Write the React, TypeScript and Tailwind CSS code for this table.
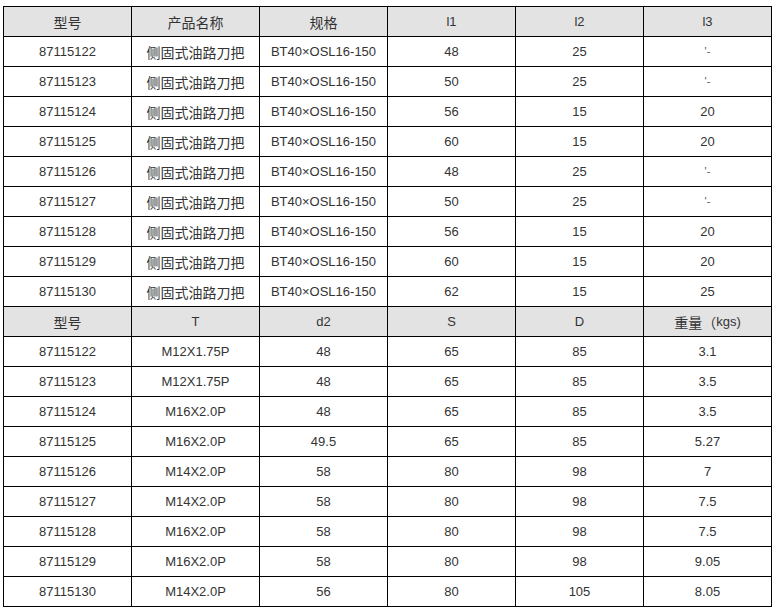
import React from "react";

const CJK = /[\u3000-\u9fff\uff00-\uffef]/;

function Txt({ t }: { t: string }) {
  // split into CJK and Latin runs
  const parts: { s: string; c: boolean }[] = [];
  for (const ch of t) {
    const c = CJK.test(ch);
    const last = parts[parts.length - 1];
    if (last && last.c === c) last.s += ch;
    else parts.push({ s: ch, c });
  }
  return (
    <>
      {parts.map((p, i) =>
        p.c ? (
          <span key={i} className="text-[14px] [font-family:'Noto_Sans_CJK_SC',sans-serif]">
            {p.s}
          </span>
        ) : (
          <span key={i} className="text-[13px] [font-family:'Liberation_Sans',Arial,sans-serif]">
            {p.s}
          </span>
        )
      )}
    </>
  );
}

const head1 = ["型号", "产品名称", "规格", "l1", "l2", "l3"];
const rows1 = [
  ["87115122", "侧固式油路刀把", "BT40×OSL16-150", "48", "25", "'-"],
  ["87115123", "侧固式油路刀把", "BT40×OSL16-150", "50", "25", "'-"],
  ["87115124", "侧固式油路刀把", "BT40×OSL16-150", "56", "15", "20"],
  ["87115125", "侧固式油路刀把", "BT40×OSL16-150", "60", "15", "20"],
  ["87115126", "侧固式油路刀把", "BT40×OSL16-150", "48", "25", "'-"],
  ["87115127", "侧固式油路刀把", "BT40×OSL16-150", "50", "25", "'-"],
  ["87115128", "侧固式油路刀把", "BT40×OSL16-150", "56", "15", "20"],
  ["87115129", "侧固式油路刀把", "BT40×OSL16-150", "60", "15", "20"],
  ["87115130", "侧固式油路刀把", "BT40×OSL16-150", "62", "15", "25"],
];
const head2 = ["型号", "T", "d2", "S", "D", "重量（kgs)"];
const rows2 = [
  ["87115122", "M12X1.75P", "48", "65", "85", "3.1"],
  ["87115123", "M12X1.75P", "48", "65", "85", "3.5"],
  ["87115124", "M16X2.0P", "48", "65", "85", "3.5"],
  ["87115125", "M16X2.0P", "49.5", "65", "85", "5.27"],
  ["87115126", "M14X2.0P", "58", "80", "98", "7"],
  ["87115127", "M14X2.0P", "58", "80", "98", "7.5"],
  ["87115128", "M16X2.0P", "58", "80", "98", "7.5"],
  ["87115129", "M16X2.0P", "58", "80", "98", "9.05"],
  ["87115130", "M14X2.0P", "56", "80", "105", "8.05"],
];

function Row({ cells, header }: { cells: string[]; header?: boolean }) {
  return (
    <>
      {cells.map((c, i) => (
        <div
          key={i}
          className={`h-[30px] border-r border-b border-black flex items-center justify-center text-[#333333] leading-none ${
            header ? "bg-[#e3e3e3]" : "bg-white"
          }`}
        >
          {c === "'-" ? (
            <span className="text-[11px] text-[#555] [font-family:'Liberation_Sans',Arial,sans-serif]">'-</span>
          ) : (
            <Txt t={c} />
          )}
        </div>
      ))}
    </>
  );
}

export default function App() {
  return (
    <div className="w-[777px] h-[611px] bg-white pt-[6px] pl-[3px]">
      <div className="grid grid-cols-[repeat(6,128px)] w-max border-l border-t border-black">
        <Row cells={head1} header />
        {rows1.map((r, i) => (
          <Row key={"a" + i} cells={r} />
        ))}
        <Row cells={head2} header />
        {rows2.map((r, i) => (
          <Row key={"b" + i} cells={r} />
        ))}
      </div>
    </div>
  );
}
